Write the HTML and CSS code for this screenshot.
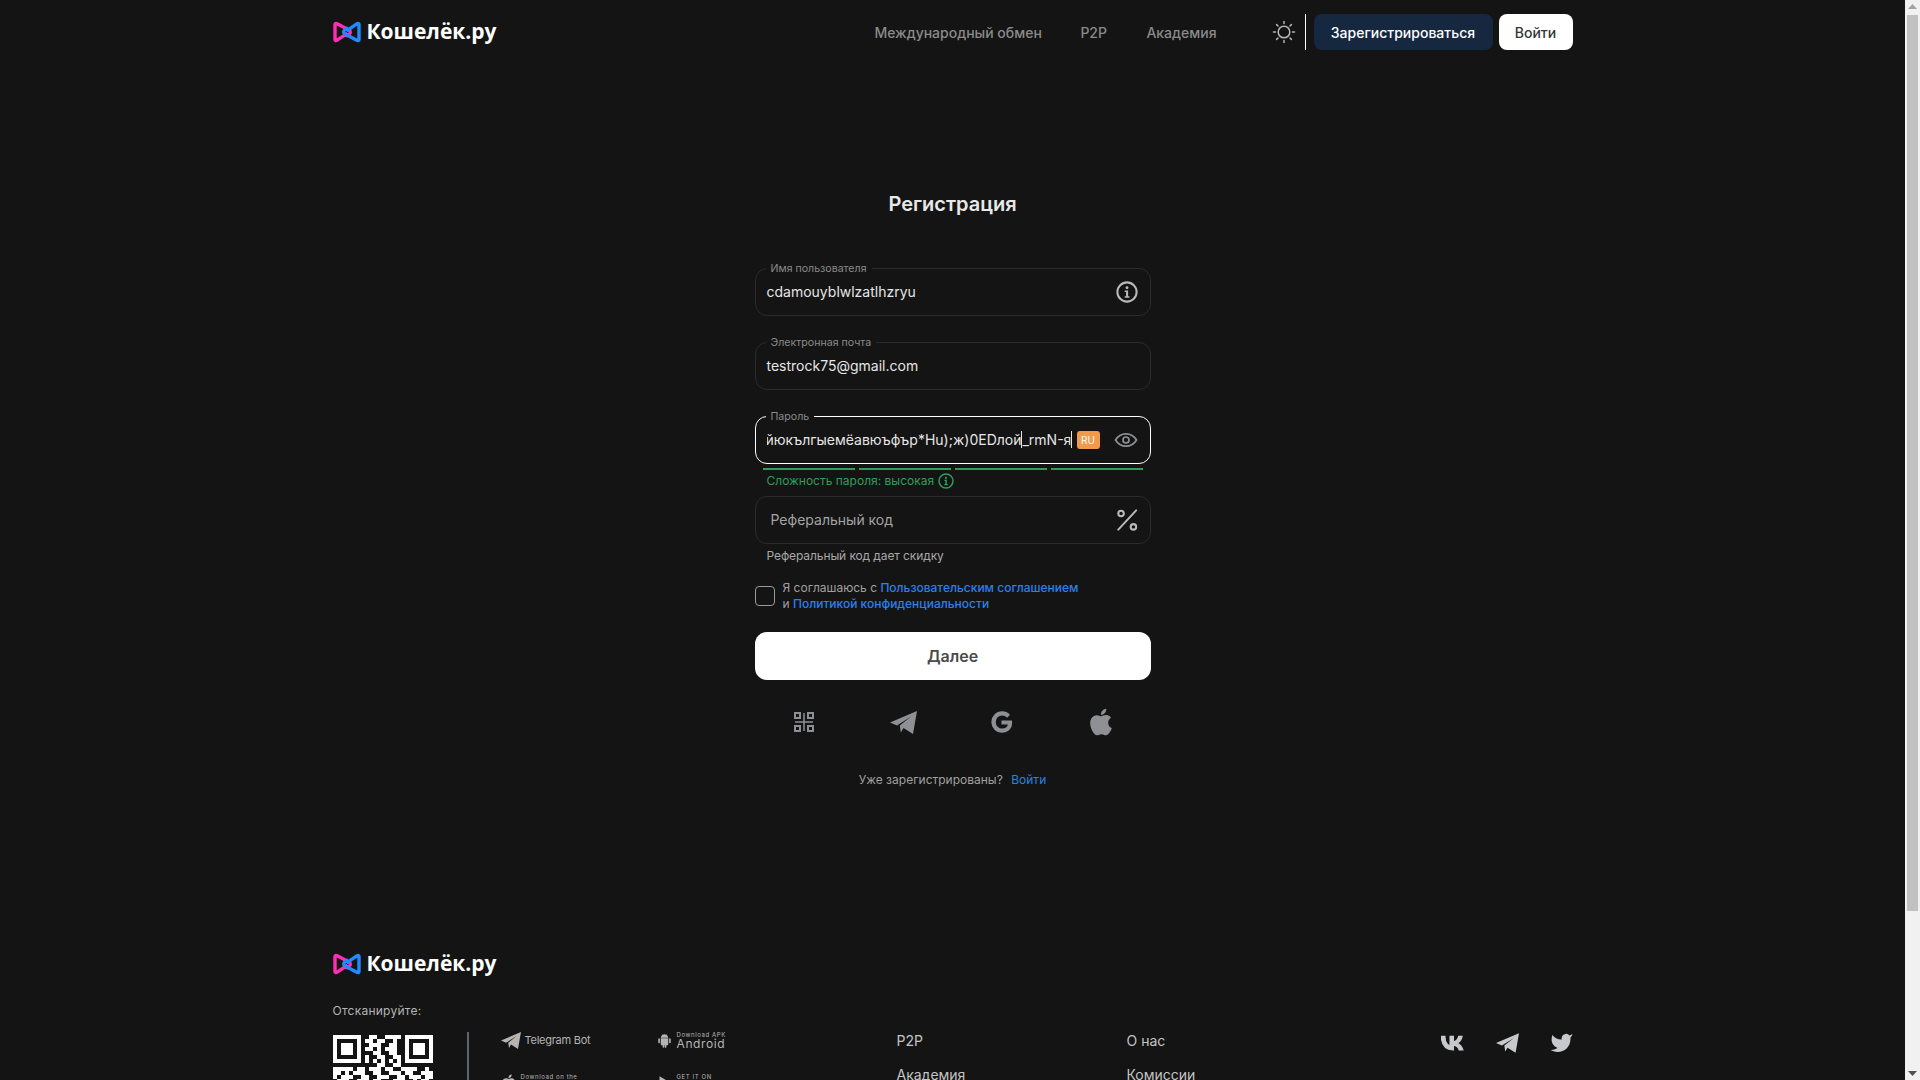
FILE: index.html
```html
<!DOCTYPE html>
<html lang="ru">
<head>
<meta charset="utf-8">
<title>Кошелёк.ру — Регистрация</title>
<link rel="stylesheet" href="styles.css">
</head>
<body>
<svg width="0" height="0" class="defs">
  <defs>
    <symbol id="logo" viewBox="0 0 28 22">
      <path d="M14.5 12.2 3.8 19.4c-.8.5-1.800 0-1.800-1V3.600c0-1 1-1.500 1.800-1L16.300 9.300c1.300.8 1.300 2.600.2 3.500L13 15.300" fill="none" stroke="#ff2eb4" stroke-width="3.400" stroke-linejoin="round"/>
      <path d="M13.500 9.800 24.200 2.600c.8-.5 1.800 0 1.800 1v14.800c0 1-1 1.500-1.800 1L11.700 12.700c-1.300-.8-1.300-2.600-.2-3.500L15 6.700" fill="none" stroke="#1f8bff" stroke-width="3.400" stroke-linejoin="round"/>
    </symbol>
    <symbol id="plane" viewBox="0 0 27 23">
      <path d="M0 11.500 27 0l-4 23-9.500-6-2.700 4.500-1-7L21 5.500 7 14.500z"/>
    </symbol>
    <symbol id="info" viewBox="0 0 24 24">
      <circle cx="12" cy="12" r="10.500" fill="none" stroke="currentColor" stroke-width="2.200"/>
      <circle cx="12" cy="7.400" r="1.600" fill="currentColor"/>
      <path d="M9.500 10.300h3.700v6.200h1.500v1.700H9.500v-1.700h1.500v-4.500H9.500z" fill="currentColor"/>
    </symbol>
  </defs>
</svg>

<aside class="scrollbar">
  <svg class="sb-arrow" viewBox="0 0 15 15"><path d="M7.500 4 12 9H3z" fill="#a3a3a3"/></svg>
  <span class="sb-thumb"></span>
  <svg class="sb-arrow sb-down" viewBox="0 0 15 15"><path d="M7.500 11 3 6h9z" fill="#505050"/></svg>
</aside>

<header class="topbar">
  <div class="wrap topbar-row">
    <a class="brand"><svg class="brand-mark"><use href="#logo"/></svg><span class="brand-name">Кошелёк.ру</span></a>
    <nav class="nav">
      <a class="nav-link nav-wide">Международный обмен</a>
      <a class="nav-link nav-p2p">P2P</a>
      <a class="nav-link">Академия</a>
    </nav>
    <div class="actions">
      <svg class="sun" viewBox="0 0 24 24" fill="none" stroke="#b5b5b5" stroke-width="1.500" stroke-linecap="round">
        <circle cx="12" cy="12" r="5.800"/>
        <path d="M12 1.500v2M12 20.500v2M1.500 12h2M20.500 12h2M4.600 4.600 6 6M18 18l1.400 1.400M4.600 19.400 6 18M18 6l1.400-1.400"/>
      </svg>
      <span class="vline"></span>
      <a class="btn btn-reg">Зарегистрироваться</a>
      <a class="btn btn-login">Войти</a>
    </div>
  </div>
</header>

<main class="form">
  <h1 class="title">Регистрация</h1>

  <div class="field">
    <span class="legend">Имя пользователя</span>
    <span class="value">cdamouyblwlzatlhzryu</span>
    <svg class="field-icon"><use href="#info"/></svg>
  </div>

  <div class="field field-gap">
    <span class="legend">Электронная почта</span>
    <span class="value">testrock75@gmail.com</span>
  </div>

  <div class="field field-gap field-active">
    <span class="legend">Пароль</span>
    <span class="value value-clip"><span class="clip-in">йюкългыемёавюъфър*Hu);ж)0EDлой<i class="caret"></i>_rmN-я<i class="caret"></i></span></span>
    <span class="lang">RU</span>
    <svg class="eye" viewBox="0 0 24 24" fill="none" stroke="#8e9095" stroke-width="1.700">
      <path d="M1.500 12C4 7.800 7.700 5.800 12 5.800s8 2 10.500 6.200C20 16.200 16.300 18.200 12 18.200S4 16.200 1.500 12z"/>
      <circle cx="12" cy="12" r="3"/>
    </svg>
  </div>
  <div class="bars"><span></span><span></span><span></span><span></span></div>
  <div class="strength">Сложность пароля: высокая <svg class="strength-icon"><use href="#info"/></svg></div>

  <div class="field field-ref">
    <span class="value value-ref">Реферальный код</span>
    <svg class="field-icon" viewBox="0 0 24 24" fill="none" stroke="currentColor" stroke-width="2.200">
      <path d="M22 1.500 2.500 22.500" stroke-linecap="round"/>
      <circle cx="5.500" cy="5" r="3"/>
      <circle cx="19" cy="19.500" r="3"/>
    </svg>
  </div>
  <p class="hint">Реферальный код дает скидку</p>

  <label class="agree">
    <span class="check"></span>
    <span class="agree-text">Я соглашаюсь с <a class="link">Пользовательским соглашением</a><br>и <a class="link">Политикой конфиденциальности</a></span>
  </label>

  <a class="btn-next">Далее</a>

  <div class="socials">
    <span class="social"><svg class="i-qr" viewBox="0 0 20 20" fill="none" stroke="#8e9095" stroke-width="2">
      <rect x="1" y="1" width="5" height="5"/><rect x="14" y="1" width="5" height="5"/><rect x="1" y="14" width="5" height="5"/><rect x="14" y="14" width="5" height="5"/>
      <path d="M1 10h18M10 1v18" stroke-width="1.500"/>
    </svg></span>
    <span class="social"><svg class="i-plane"><use href="#plane"/></svg></span>
    <span class="social"><svg class="i-g" viewBox="0 0 24 24"><path d="M21.350 11.100h-9.170v2.730h6.510c-.33 3.810-3.500 5.440-6.500 5.440C8.360 19.270 5 16.250 5 12c0-4.100 3.200-7.270 7.200-7.270 3.090 0 4.900 1.970 4.900 1.970L19 4.720S16.560 2 12.100 2C6.420 2 2.030 6.800 2 12c0 5.050 4.130 10 10.220 10 5.350 0 9.250-3.670 9.250-9.090 0-1.150-.12-1.810-.12-1.810z" stroke="#8e9095" stroke-width="1.400"/></svg></span>
    <span class="social"><svg class="i-apple" viewBox="3 1.500 18 21"><path d="M18.710 19.500c-.83 1.240-1.710 2.450-3.050 2.470-1.340.03-1.770-.79-3.290-.79-1.530 0-2 .77-3.270.82-1.310.05-2.300-1.320-3.140-2.530C4.250 17 2.940 12.450 4.700 9.390c.87-1.520 2.430-2.480 4.120-2.510 1.280-.02 2.500.87 3.290.87.78 0 2.260-1.070 3.810-.91.65.03 2.470.26 3.640 1.980-.09.06-2.170 1.280-2.150 3.810.03 3.020 2.650 4.030 2.680 4.040-.03.07-.42 1.440-1.380 2.830M13 3.500c.73-.83 1.940-1.460 2.940-1.500.13 1.170-.34 2.350-1.040 3.190-.69.850-1.830 1.510-2.950 1.420-.15-1.150.41-2.350 1.050-3.110z"/></svg></span>
  </div>

  <p class="already">Уже зарегистрированы? <a class="link-plain">Войти</a></p>
</main>

<footer class="footer">
  <div class="wrap">
    <a class="brand"><svg class="brand-mark"><use href="#logo"/></svg><span class="brand-name">Кошелёк.ру</span></a>
    <p class="scan">Отсканируйте:</p>
    <div class="footer-row">
      <svg class="qr" viewBox="0 0 25 25" shape-rendering="crispEdges" fill="#fff">
        <path fill-rule="evenodd" d="M0 0h7v7H0zM1 1v5h5V1z"/><path d="M2 2h3v3H2z"/>
        <path fill-rule="evenodd" d="M18 0h7v7h-7zM19 1v5h5V1z"/><path d="M20 2h3v3h-3z"/>
        <path fill-rule="evenodd" d="M0 18h7v7H0zM1 19v5h5v-5z"/><path d="M2 20h3v3H2z"/>
        <path d="M9 0h2v1H9zM13 0h4v1h-4zM8 1h2v1H8zM11 1h2v1h-2zM15 1h1v1h-1zM9 2h3v1H9zM14 2h2v1h-2zM8 3h2v1H8zM11 3h1v1h-1zM13 3h3v1h-3zM10 4h2v1h-2zM14 4h2v1h-2zM8 5h1v1H8zM11 5h2v1h-2zM15 5h2v1h-2zM8 6h1v1H8zM10 6h1v1h-1zM12 6h1v1h-1zM14 6h1v1h-1zM16 6h1v1h-1zM11 7h2v1h-2zM15 7h2v1h-2z"/>
        <path d="M0 8h5v1H0zM6 8h2v1H6zM9 8h3v1H9zM13 8h2v1h-2zM17 8h4v1h-4zM23 8h1v1h-1zM0 9h2v1H0zM3 9h1v1H3zM5 9h3v1H5zM10 9h2v1h-2zM14 9h3v1h-3zM18 9h2v1h-2zM22 9h3v1h-3zM0 10h1v1H0zM2 10h3v1H2zM7 10h2v1H7zM11 10h3v1h-3zM16 10h2v1h-2zM19 10h3v1h-3zM23 10h2v1h-2zM1 11h3v1H1zM6 11h3v1H6zM10 11h2v1h-2zM15 11h3v1h-3zM20 11h1v1h-1zM22 11h2v1h-2zM0 12h2v1H0zM4 12h2v1H4zM8 12h3v1H8zM12 12h2v1h-2zM17 12h3v1h-3zM21 12h4v1h-4zM2 13h3v1H2zM6 13h1v1H6zM9 13h3v1H9zM14 13h2v1h-2zM18 13h2v1h-2zM23 13h2v1h-2zM0 14h4v1H0zM5 14h3v1H5zM10 14h1v1h-1zM13 14h3v1h-3zM17 14h1v1h-1zM20 14h3v1h-3zM1 15h1v1H1zM4 15h3v1H4zM8 15h3v1H8zM12 15h2v1h-2zM16 15h3v1h-3zM21 15h1v1h-1zM23 15h2v1h-2zM0 16h2v1H0zM3 16h2v1H3zM6 16h2v1H6zM10 16h3v1h-3zM15 16h2v1h-2zM18 16h4v1h-4zM9 17h3v1H9zM13 17h2v1h-2zM16 17h2v1h-2zM20 17h3v1h-3zM8 18h2v1H8zM11 18h3v1h-3zM16 18h3v1h-3zM21 18h3v1h-3zM9 19h1v1H9zM12 19h3v1h-3zM17 19h2v1h-2zM20 19h2v1h-2zM23 19h2v1h-2zM8 20h3v1H8zM13 20h2v1h-2zM16 20h4v1h-4zM22 20h2v1h-2zM10 21h2v1h-2zM14 21h3v1h-3zM19 21h1v1h-1zM21 21h4v1h-4zM8 22h2v1H8zM11 22h3v1h-3zM16 22h2v1h-2zM20 22h3v1h-3zM9 23h3v1H9zM14 23h1v1h-1zM17 23h3v1h-3zM22 23h3v1h-3zM8 24h2v1H8zM12 24h3v1h-3zM16 24h3v1h-3zM21 24h2v1h-2z"/>
      </svg>
      <span class="footer-divider"></span>
      <div class="stores">
        <a class="store store-tg"><svg class="store-plane"><use href="#plane"/></svg><span>Telegram Bot</span></a>
        <a class="store store-apk">
          <svg class="store-android" viewBox="0 0 24 24"><path d="M6 8.500h12v9.500a1.500 1.500 0 0 1-1.500 1.500H15v3a1.300 1.300 0 0 1-2.600 0v-3h-.8v3a1.300 1.300 0 0 1-2.600 0v-3H7.500A1.500 1.500 0 0 1 6 18zM6 7.700a6 6 0 0 1 3-4.800L8.200 1.500l.5-.3.800 1.400a6.500 6.500 0 0 1 5 0l.8-1.400.5.300L15 2.900a6 6 0 0 1 3 4.800zM3.300 8.500a1.300 1.300 0 0 1 1.300 1.300v5.400a1.300 1.300 0 0 1-2.600 0V9.800a1.300 1.300 0 0 1 1.300-1.300zM20.700 8.500A1.300 1.300 0 0 1 22 9.800v5.400a1.300 1.300 0 0 1-2.600 0V9.800a1.300 1.300 0 0 1 1.300-1.300z"/></svg>
          <span class="store-text"><small class="store-small">Download APK</small><b class="store-big">Android</b></span>
        </a>
        <a class="store store-apple">
          <svg class="store-android" viewBox="3 1.500 18 21"><path d="M18.710 19.500c-.83 1.240-1.710 2.450-3.050 2.470-1.340.03-1.770-.79-3.290-.79-1.530 0-2 .77-3.270.82-1.310.05-2.300-1.320-3.140-2.530C4.250 17 2.940 12.450 4.700 9.390c.87-1.520 2.430-2.480 4.120-2.510 1.280-.02 2.500.87 3.290.87.78 0 2.260-1.070 3.810-.91.65.03 2.470.26 3.640 1.980-.09.06-2.170 1.280-2.150 3.810.03 3.020 2.650 4.030 2.680 4.040-.03.07-.42 1.440-1.380 2.830M13 3.500c.73-.83 1.940-1.460 2.940-1.500.13 1.170-.34 2.350-1.040 3.190-.69.850-1.830 1.510-2.950 1.420-.15-1.150.41-2.350 1.050-3.110z"/></svg>
          <span class="store-text"><small class="store-small">Download on the</small><b class="store-big">App Store</b></span>
        </a>
        <a class="store store-play">
          <svg class="store-android" viewBox="0 0 24 24"><path d="M4 2l17 10L4 22z"/></svg>
          <span class="store-text"><small class="store-small">GET IT ON</small><b class="store-big">Google Play</b></span>
        </a>
      </div>
      <ul class="links links-a">
        <li>P2P</li><li>Академия</li><li>Блог</li>
      </ul>
      <ul class="links links-b">
        <li>О нас</li><li>Комиссии</li><li>Поддержка</li>
      </ul>
      <div class="footer-social">
        <svg class="f-vk" viewBox="3 6 20 12.500"><path d="M13.070 18C6.900 18 3.400 13.800 3.200 6.700h3.100c.1 5.200 2.400 7.400 4.200 7.900V6.700h2.900v4.500c1.800-.2 3.700-2.200 4.300-4.500h2.900c-.5 2.800-2.500 4.800-4 5.700 1.500.7 3.800 2.500 4.700 5.600h-3.200c-.7-2.100-2.400-3.800-4.700-4V18z" stroke="#c7c9cc" stroke-width=".9"/></svg>
        <svg class="f-tg"><use href="#plane"/></svg>
        <svg class="f-tw" viewBox="1 2 22 20"><path d="M23 3a10.900 10.900 0 0 1-3 1.460 4.480 4.480 0 0 0-7.860 3v1A10.660 10.660 0 0 1 3 4s-4 9 5 13a11.640 11.640 0 0 1-7 2c9 5 20 0 20-11.500a4.500 4.500 0 0 0-.08-.83A7.720 7.720 0 0 0 23 3z"/></svg>
      </div>
    </div>
  </div>
</footer>
</body>
</html>
```

FILE: styles.css
```css
* { box-sizing: border-box; }
html { background: #141414; }
body { margin: 0; padding-right: 15px; min-height: 1265px; background: #141414; color: #fff; font-family: Inter, "Noto Sans", sans-serif; font-size: 14px; }
.defs { position: absolute; }
a { color: inherit; text-decoration: none; }
p, h1, ul { margin: 0; padding: 0; }
ul { list-style: none; }

.scrollbar { position: fixed; top: 0; right: 0; bottom: 0; width: 15px; background: #f1f1f1; display: flex; flex-direction: column; align-items: center; }
.sb-arrow { width: 15px; height: 15px; display: block; flex: none; }
.sb-down { margin-top: auto; }
.sb-thumb { display: block; width: 11px; height: 896px; background: #c1c1c1; }

.wrap { width: 1240px; margin: 0 auto; }

.topbar { height: 64px; padding-top: 14px; }
.topbar-row { display: flex; align-items: center; height: 36px; }
.brand { display: flex; align-items: center; gap: 6px; height: 26px; }
.brand-mark { width: 28px; height: 22px; display: block; }
.brand-name { font-family: "Open Sans", Inter, sans-serif; font-weight: 700; font-size: 21px; line-height: 24px; color: #fff; position: relative; top: -1px; }
.nav { display: flex; margin-left: auto; font-weight: 500; color: #8a8a8a; font-size: 14px; }
.nav-link { line-height: 20px; position: relative; top: 1px; }
.nav-wide { width: 206px; }
.nav-p2p { width: 66px; }
.actions { display: flex; align-items: center; margin-left: 55px; }
.sun { width: 24px; height: 24px; display: block; margin-right: 9px; }
.vline { width: 1px; height: 36px; background: #fff; margin-right: 8px; }
.btn { display: flex; align-items: center; justify-content: center; height: 36px; border-radius: 8px; font-weight: 500; font-size: 14px; }
.btn-reg { width: 179px; background: #162840; color: #fff; margin-right: 6px; }
.btn-login { width: 74px; background: #fff; color: #333; }

.form { width: 396px; margin: 0 auto; padding-top: 128px; }
.title { font-size: 20px; line-height: 24px; font-weight: 600; text-align: center; color: #e8e8e8; margin-bottom: 52px; }

.field { position: relative; display: flex; align-items: center; height: 48px; border: 1px solid #2b2b2b; border-radius: 12px; padding: 0 11px; }
.field-gap { margin-top: 26px; }
.field-active { border-color: #fff; padding-right: 0; }
.legend { position: absolute; left: 10px; top: -6px; padding: 0 5px; background: #141414; font-size: 10.6px; line-height: 12px; color: #8b8b8b; }
.value { flex: 1; min-width: 0; font-size: 14px; line-height: 20px; color: #e6e6e6; white-space: nowrap; }
.value-clip { overflow: hidden; }
.clip-in { display: block; margin-left: -1px; }
.caret { display: inline-block; width: 1px; height: 17px; background: #e6e6e6; vertical-align: -3px; }
.value-ref { padding-left: 4px; color: #a3a3a3; }
.field-icon { width: 22px; height: 22px; display: block; color: #b9b9b9; margin-left: 8px; margin-right: 1px; flex: none; }
.lang { flex: none; width: 23px; height: 18px; margin-left: 3px; border-radius: 3px; background: #f09a4a; color: #fff; font-size: 10px; line-height: 18px; text-align: center; }
.eye { width: 24px; height: 24px; display: block; flex: none; margin-left: 14px; margin-right: 12px; }

.bars { display: flex; gap: 4px; padding: 0 8px; margin-top: 4px; }
.bars span { flex: 1; height: 2px; background: #2f9e5b; }
.strength { display: flex; align-items: center; gap: 4px; padding-left: 12px; margin-top: 1px; font-size: 12px; line-height: 16px; color: #2f9e5b; height: 19px; }
.strength-icon { width: 16px; height: 16px; display: block; }

.field-ref { margin-top: 6px; }
.hint { margin-top: 4px; padding-left: 12px; font-size: 12px; line-height: 16px; color: #a8a8a8; letter-spacing: -.1px; }

.agree { display: flex; align-items: center; gap: 8px; margin-top: 16px; font-size: 12px; line-height: 16px; color: #a0a0a0; }
.check { flex: none; width: 20px; height: 20px; border: 1px solid #9a9a9a; border-radius: 4px; }
.link { color: #2a80f0; font-weight: 550; }
.btn-next { display: flex; align-items: center; justify-content: center; height: 48px; margin-top: 20px; background: #fff; border-radius: 12px; color: #4b4b4b; font-weight: 600; font-size: 16px; }

.socials { display: flex; margin-top: 26px; height: 32px; fill: #8e9095; }
.social { flex: 1; display: flex; align-items: center; justify-content: center; }
.i-qr { width: 20px; height: 20px; display: block; }
.i-plane { width: 27px; height: 23px; display: block; }
.i-g { width: 24px; height: 24px; display: block; }
.i-apple { width: 24px; height: 28px; display: block; }

.already { margin-top: 34px; text-align: center; font-size: 12px; line-height: 16px; color: #a0a0a0; }
.link-plain { color: #2a80f0; margin-left: 5px; }

.footer { margin-top: 163px; padding-bottom: 40px; }
.scan { margin-top: 26px; font-size: 12px; line-height: 16px; color: #b5b5b5; letter-spacing: .25px; }
.footer-row { display: flex; margin-top: 12px; }
.qr { width: 100px; height: 100px; flex: none; margin-top: 4px; display: block; }
.footer-divider { width: 2px; height: 104px; background: #5b6570; margin-left: 34px; margin-top: 1px; flex: none; }
.stores { width: 396px; flex: none; margin-left: 32px; display: grid; grid-template-columns: 156px 1fr; grid-auto-rows: 42px; fill: #b5b5b5; color: #b5b5b5; }
.store { display: flex; align-items: flex-start; gap: 5px; white-space: nowrap; }
.store-tg { font-size: 11px; line-height: 16px; letter-spacing: -.25px; gap: 4px; padding-top: 1px; }
.store-plane { width: 20px; height: 17px; display: block; }
.store-android { width: 15px; height: 17px; display: block; flex: none; margin-top: 1px; }
.store-text { display: flex; flex-direction: column; }
.store-small { font-size: 6px; line-height: 7px; letter-spacing: .6px; }
.store-big { font-weight: 400; font-size: 12px; line-height: 11px; letter-spacing: .6px; }
.links { flex: none; font-size: 14px; line-height: 20px; color: #c4c4c4; }
.links li { margin-bottom: 14px; }
.links-a { width: 230px; }
.links-b { width: 200px; }
.footer-social { display: flex; margin-left: auto; gap: 31px; fill: #c7c9cc; align-items: flex-start; margin-top: 2px; }
.f-vk { width: 24px; height: 20px; display: block; }
.f-tg { width: 23px; height: 20px; display: block; }
.f-tw { width: 23px; height: 20px; display: block; }
```
